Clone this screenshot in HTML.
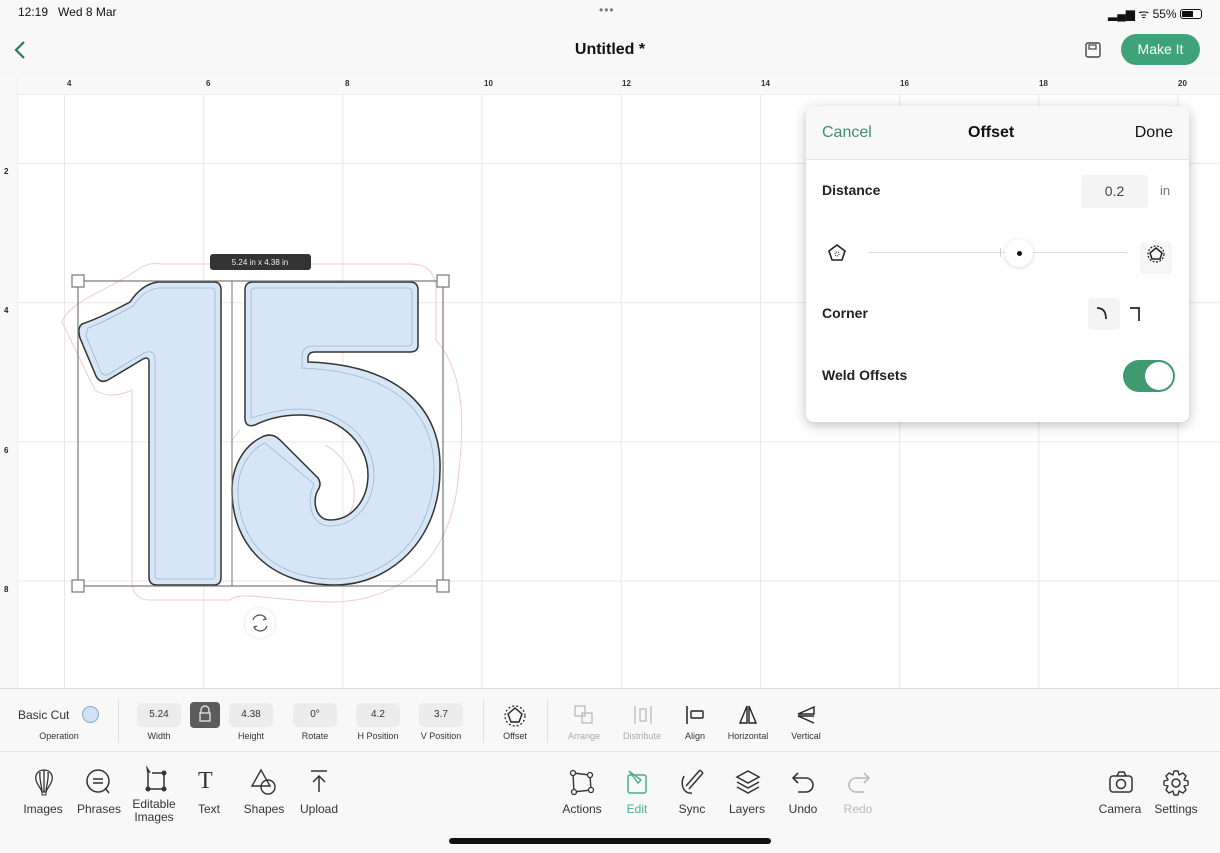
<!DOCTYPE html>
<html><head><meta charset="utf-8"><style>
*{margin:0;padding:0;box-sizing:border-box}
body{width:1220px;height:853px;overflow:hidden;background:#f8f8f8;font-family:"Liberation Sans",sans-serif;color:#222;position:relative}
.abs{position:absolute}
.canvas{left:0;top:77px;width:1220px;height:611px;background:#fff;
background-image:linear-gradient(90deg,#e8e8e8 1px,transparent 1px),linear-gradient(#e8e8e8 1px,transparent 1px);
background-size:139.2px 139.2px,139.2px 139.2px;background-position:64px 86px,64px 86px}
.rt{left:0;top:77px;width:1220px;height:18px;background:#f9f9f9;border-bottom:1px solid #eee;font-size:8px;color:#333;font-weight:bold}
.rl{left:0;top:77px;width:18px;height:611px;background:#f9f9f9;border-right:1px solid #eee;font-size:8px;font-weight:bold}
.tb1{left:0;top:688px;width:1220px;height:64px;background:#f8f8f8;border-top:1px solid #ddd;border-bottom:1px solid #e6e6e6}
.fld{position:absolute;top:703px;height:24px;background:#ececec;border-radius:5px;font-size:10px;text-align:center;line-height:24px;color:#333}
.lbl{position:absolute;top:731px;font-size:9px;color:#333;text-align:center;width:70px;margin-left:-35px}
.bl{position:absolute;top:803px;font-size:12px;color:#333;text-align:center;width:70px;margin-left:-35px;line-height:13px}
.ic{position:absolute}
</style></head><body>
<div class="abs" style="left:18px;top:5px;font-size:12px;color:#111">12:19&nbsp;&nbsp; Wed 8 Mar</div>
<div class="abs" style="left:599px;top:3px;font-size:12px;color:#777;letter-spacing:1px">•••</div>
<div class="abs" style="left:1108px;top:5px;font-size:12px;color:#111">▂▄▆ ᯤ 55% <span style="display:inline-block;width:22px;height:10px;border:1px solid #111;border-radius:3px;vertical-align:-1px;position:relative"><span style="position:absolute;left:1px;top:1px;width:11px;height:6px;background:#111"></span></span></div>
<svg class="abs" style="left:10px;top:40px" width="20" height="20"><path d="M14 2 L6 10 L14 18" fill="none" stroke="#2c7a58" stroke-width="2.2"/></svg>
<div class="abs" style="left:0;width:1220px;top:41px;text-align:center;font-size:16px;font-weight:bold;color:#111">Untitled *</div>
<svg class="abs" style="left:1084px;top:41px" width="18" height="18"><rect x="2" y="2" width="14" height="14" rx="2" fill="none" stroke="#444" stroke-width="1.4"/><rect x="5" y="4" width="7" height="4" fill="none" stroke="#444" stroke-width="1.2"/></svg>
<div class="abs" style="left:1121px;top:34px;width:79px;height:31px;border-radius:16px;background:#3fa37a;color:#fff;font-size:14px;text-align:center;line-height:31px">Make It</div>

<div class="abs canvas"></div>
<div class="abs rt">
<span class="abs" style="left:67px;top:2px">4</span><span class="abs" style="left:206px;top:2px">6</span><span class="abs" style="left:345px;top:2px">8</span><span class="abs" style="left:484px;top:2px">10</span><span class="abs" style="left:622px;top:2px">12</span><span class="abs" style="left:761px;top:2px">14</span><span class="abs" style="left:900px;top:2px">16</span><span class="abs" style="left:1039px;top:2px">18</span><span class="abs" style="left:1178px;top:2px">20</span></div>
<div class="abs rl"><span class="abs" style="left:4px;top:90px">2</span><span class="abs" style="left:4px;top:229px">4</span><span class="abs" style="left:4px;top:369px">6</span><span class="abs" style="left:4px;top:508px">8</span></div>

<svg class="abs" style="left:0;top:0" width="1220" height="690">
<g fill="none" stroke="#f2c9d2" stroke-width="1">
<path d="M62,322 C70,300 110,290 140,268 Q150,262 160,264 L226,264 L234,270 L238,264 L410,264 Q436,264 436,290 L436,340 C470,380 462,440 458,480 C450,560 400,600 335,602 C280,602 240,590 230,600 L150,600 Q132,600 132,580 L132,390 Q110,400 95,390 Z"/>
<path d="M232,440 L240,430 M325,445 C355,460 365,505 340,525"/>
</g>
<g stroke="#333" stroke-width="1.5" fill="#d6e6f6">
<path d="M82,324 Q100,318 130,302 Q142,284 158,282 L214,282 Q221,282 221,290 L221,577 Q221,585 214,585 L157,585 Q149,585 149,577 L149,362 Q149,356 143,359 L108,380 Q100,384 96,376 L80,338 Q77,328 82,324 Z"/>
<path d="M245,290 Q245,282 253,282 L410,282 Q418,282 418,290 L418,345 Q418,352 410,352 L315,352 Q308,352 308,358 L308,362 C400,365 442,410 440,470 C440,540 390,585 335,585 C270,585 232,545 232,490 C232,465 245,445 262,437 Q272,432 280,440 L318,478 Q322,484 318,490 C312,500 315,520 330,520 C352,520 368,500 368,475 C368,440 335,415 300,415 C280,415 265,420 255,425 Q245,428 245,418 Z"/>
</g>
<g stroke="#9bb6d2" stroke-width="0.8" fill="none">
<path d="M88,328 Q104,322 133,306 Q144,290 158,288 L212,288 Q215,288 215,292 L215,576 Q215,579 212,579 L159,579 Q155,579 155,576 L155,358 Q154,349 144,353 L109,374 Q104,377 101,372 L86,336 Z"/>
<path d="M251,292 Q251,288 255,288 L408,288 Q412,288 412,292 L412,343 Q412,346 408,346 L312,346 Q302,346 302,358 L302,368 C395,372 434,412 434,470 C434,535 388,579 335,579 C274,579 238,543 238,490 C238,468 250,450 265,443 L314,484 C306,500 310,526 330,526 C356,526 374,502 374,475 C374,436 338,409 300,409 C282,409 268,413 251,418 Z"/>
</g>
<rect x="78" y="281" width="365" height="305" fill="none" stroke="#777" stroke-width="1.2"/>
<line x1="232" y1="281" x2="232" y2="586" stroke="#777" stroke-width="1"/>
<g fill="#fff" stroke="#777" stroke-width="1.2"><rect x="72" y="275" width="12" height="12"/><rect x="437" y="275" width="12" height="12"/><rect x="72" y="580" width="12" height="12"/><rect x="437" y="580" width="12" height="12"/></g>
<rect x="210" y="254" width="101" height="16" rx="3" fill="#333"/>
<text x="260" y="265" font-size="8" fill="#eee" text-anchor="middle" font-family="Liberation Sans">5.24 in x 4.38 in</text>
<circle cx="260" cy="623" r="16" fill="#fff" stroke="#eee"/>
<path d="M253,620 A7,7 0 0 1 266,619 M267,626 A7,7 0 0 1 254,627 M264,616 L266,619 L263,620 M256,630 L254,627 L257,626" fill="none" stroke="#555" stroke-width="1.3"/>
</svg>

<div class="abs" style="left:806px;top:106px;width:383px;height:316px;background:#fff;border-radius:8px;box-shadow:0 3px 12px rgba(0,0,0,.25)">
<div style="height:54px;background:#f8f8f8;border-bottom:1px solid #e3e3e3;border-radius:8px 8px 0 0;position:relative">
<span class="abs" style="left:16px;top:18px;font-size:16px;color:#3f8f6c">Cancel</span>
<span class="abs" style="left:162px;top:18px;font-size:16px;font-weight:bold;color:#111">Offset</span>
<span class="abs" style="right:16px;top:18px;font-size:16px;color:#111">Done</span></div>
<span class="abs" style="left:16px;top:76px;font-size:14px;font-weight:bold">Distance</span>
<div class="abs" style="left:275px;top:69px;width:67px;height:33px;background:#f4f4f4;border-radius:4px;text-align:center;line-height:33px;font-size:14px;color:#444">0.2</div>
<span class="abs" style="left:354px;top:77px;font-size:13px;color:#777">in</span>
<svg class="abs" style="left:20px;top:136px" width="22" height="22"><path d="M11,3 L19,9 L16,18 L6,18 L3,9 Z" fill="none" stroke="#222" stroke-width="1.6"/><circle cx="11" cy="12" r="2" fill="none" stroke="#222" stroke-dasharray="1 1"/></svg>
<div class="abs" style="left:63px;top:146px;width:258px;height:1px;background:#ddd"></div>
<div class="abs" style="left:194px;top:142px;width:1px;height:9px;background:#ccc"></div>
<div class="abs" style="left:199px;top:133px;width:28px;height:28px;border-radius:50%;background:#fff;box-shadow:0 1px 5px rgba(0,0,0,.15)"></div>
<div class="abs" style="left:211px;top:145px;width:5px;height:5px;border-radius:50%;background:#111"></div>
<div class="abs" style="left:334px;top:136px;width:32px;height:32px;background:#f6f6f6;border-radius:4px"></div>
<svg class="abs" style="left:339px;top:137px" width="22" height="22"><path d="M11,5 L17,10 L15,16 L7,16 L5,10 Z" fill="none" stroke="#222" stroke-width="1.5"/><circle cx="11" cy="11" r="8" fill="none" stroke="#222" stroke-width="1.2" stroke-dasharray="2 1.5"/></svg>
<span class="abs" style="left:16px;top:199px;font-size:14px;font-weight:bold">Corner</span>
<div class="abs" style="left:282px;top:192px;width:32px;height:32px;background:#f4f4f4;border-radius:4px"></div>
<svg class="abs" style="left:288px;top:199px" width="60" height="22"><path d="M3,3 Q12,3 12,14" fill="none" stroke="#222" stroke-width="1.7"/><path d="M36,3 L45,3 L45,16" fill="none" stroke="#222" stroke-width="1.7"/></svg>
<span class="abs" style="left:16px;top:261px;font-size:14px;font-weight:bold">Weld Offsets</span>
<div class="abs" style="left:317px;top:254px;width:52px;height:32px;border-radius:16px;background:#3f9a70"><div style="position:absolute;right:2px;top:2px;width:28px;height:28px;border-radius:50%;background:#fff"></div></div>
</div>

<div class="abs tb1"></div>
<span class="abs" style="left:18px;top:708px;font-size:12px;color:#333">Basic Cut</span>
<div class="abs" style="left:82px;top:706px;width:17px;height:17px;border-radius:50%;background:#cfe1f4;border:1px solid #8aa8c8"></div>
<div class="lbl" style="left:59px">Operation</div>
<div class="abs" style="left:118px;top:699px;width:1px;height:44px;background:#e0e0e0"></div>
<div class="fld" style="left:137px;width:44px">5.24</div><div class="lbl" style="left:159px">Width</div>
<div class="abs" style="left:190px;top:702px;width:30px;height:26px;background:#5c5c5c;border-radius:4px"></div>
<svg class="abs" style="left:197px;top:705px" width="16" height="18"><path d="M4,8 V5 A4,4 0 0 1 12,5 V8" fill="none" stroke="#ddd" stroke-width="1.4"/><rect x="3" y="8" width="10" height="8" fill="none" stroke="#ddd" stroke-width="1.4"/></svg>
<div class="fld" style="left:229px;width:44px">4.38</div><div class="lbl" style="left:251px">Height</div>
<div class="fld" style="left:293px;width:44px">0°</div><div class="lbl" style="left:315px">Rotate</div>
<div class="fld" style="left:356px;width:44px">4.2</div><div class="lbl" style="left:378px">H Position</div>
<div class="fld" style="left:419px;width:44px">3.7</div><div class="lbl" style="left:441px">V Position</div>
<div class="abs" style="left:483px;top:699px;width:1px;height:44px;background:#e0e0e0"></div>
<svg class="ic" style="left:503px;top:702px" width="24" height="26"><path d="M12,6 L19,12 L16,20 L8,20 L5,12 Z" fill="none" stroke="#222" stroke-width="1.4"/><circle cx="12" cy="14" r="10" fill="none" stroke="#222" stroke-width="1.2" stroke-dasharray="2 2"/></svg>
<div class="lbl" style="left:515px">Offset</div>
<div class="abs" style="left:547px;top:699px;width:1px;height:44px;background:#e0e0e0"></div>
<svg class="ic" style="left:573px;top:704px" width="24" height="22"><rect x="2" y="2" width="10" height="10" fill="none" stroke="#bbb" stroke-width="1.3"/><rect x="9" y="9" width="10" height="10" fill="none" stroke="#bbb" stroke-width="1.3"/></svg><div class="lbl" style="left:584px;color:#aaa">Arrange</div>
<svg class="ic" style="left:632px;top:704px" width="22" height="22"><path d="M3,2 V20 M19,2 V20" stroke="#bbb" stroke-width="1.3"/><rect x="8" y="5" width="6" height="12" fill="none" stroke="#bbb" stroke-width="1.3"/></svg><div class="lbl" style="left:642px;color:#aaa">Distribute</div>
<svg class="ic" style="left:684px;top:704px" width="22" height="22"><path d="M3,2 V20" stroke="#222" stroke-width="1.5"/><rect x="7" y="7" width="12" height="7" rx="1" fill="none" stroke="#222" stroke-width="1.4"/></svg><div class="lbl" style="left:695px">Align</div>
<svg class="ic" style="left:737px;top:704px" width="22" height="22"><path d="M10,2 L3,19 H10 Z M12,2 L19,19 H12 Z" fill="none" stroke="#222" stroke-width="1.4"/></svg><div class="lbl" style="left:748px">Horizontal</div>
<svg class="ic" style="left:795px;top:704px" width="22" height="22"><path d="M19,3 L3,10 H19 Z M19,12 L3,12 L19,19" fill="none" stroke="#222" stroke-width="1.4"/></svg><div class="lbl" style="left:806px">Vertical</div>

<svg class="ic" style="left:32px;top:768px" width="24" height="30"><path d="M12,2 C5,2 3,8 4,12 C5,17 9,20 10,24 H14 C15,20 19,17 20,12 C21,8 19,2 12,2 Z M12,2 V24 M8,4 C7,12 10,18 10,24 M16,4 C17,12 14,18 14,24" fill="none" stroke="#333" stroke-width="1.3"/><rect x="10" y="24" width="4" height="3" fill="none" stroke="#333"/></svg><div class="bl" style="left:43px">Images</div>
<svg class="ic" style="left:85px;top:768px" width="28" height="28"><circle cx="13" cy="13" r="11" fill="none" stroke="#333" stroke-width="1.5"/><path d="M8,11 H18 M8,15 H18" stroke="#333" stroke-width="1.5"/><path d="M20,20 L24,25" stroke="#333" stroke-width="1.5"/></svg><div class="bl" style="left:99px">Phrases</div>
<svg class="ic" style="left:141px;top:763px" width="28" height="30"><path d="M7,8 V26 H23 V10 H11" fill="none" stroke="#333" stroke-width="1.5"/><path d="M5,2 L10,10 L6,9 Z" fill="#333"/><circle cx="7" cy="26" r="2.5" fill="#333"/><circle cx="23" cy="26" r="2.5" fill="#333"/><circle cx="23" cy="10" r="2.5" fill="#333"/></svg><div class="bl" style="left:154px;top:798px">Editable<br>Images</div>
<div class="abs" style="left:198px;top:768px;font-family:'Liberation Serif',serif;font-size:24px;color:#333">T</div><div class="bl" style="left:209px">Text</div>
<svg class="ic" style="left:250px;top:768px" width="30" height="30"><path d="M11,2 L2,18 H20 Z" fill="none" stroke="#333" stroke-width="1.4"/><circle cx="18" cy="19" r="7" fill="none" stroke="#333" stroke-width="1.4"/></svg><div class="bl" style="left:264px">Shapes</div>
<svg class="ic" style="left:308px;top:768px" width="22" height="26"><path d="M3,3 H19 M11,24 V8 M5,14 L11,8 L17,14" fill="none" stroke="#333" stroke-width="1.5"/></svg><div class="bl" style="left:319px">Upload</div>

<svg class="ic" style="left:568px;top:768px" width="28" height="28"><path d="M5,5 L22,7 L23,22 L6,24 Z" fill="none" stroke="#333" stroke-width="1.4"/><g fill="#fff" stroke="#333" stroke-width="1.3"><circle cx="5" cy="5" r="2.5"/><circle cx="22" cy="7" r="2.5"/><circle cx="23" cy="22" r="2.5"/><circle cx="6" cy="24" r="2.5"/></g></svg><div class="bl" style="left:582px">Actions</div>
<svg class="ic" style="left:624px;top:768px" width="28" height="28"><rect x="4" y="7" width="18" height="18" rx="2" fill="none" stroke="#48b08a" stroke-width="1.5"/><path d="M5,3 L14,15 L17,12 Z" fill="none" stroke="#48b08a" stroke-width="1.4"/></svg><div class="bl" style="left:637px;color:#4cae88">Edit</div>
<svg class="ic" style="left:678px;top:768px" width="28" height="28"><path d="M22,2 L8,18 M25,5 L11,21 M22,2 L25,5 M6,8 C2,16 5,26 14,25" fill="none" stroke="#333" stroke-width="1.5"/></svg><div class="bl" style="left:692px">Sync</div>
<svg class="ic" style="left:734px;top:768px" width="28" height="28"><path d="M14,3 L25,9 L14,15 L3,9 Z M3,14 L14,20 L25,14 M3,19 L14,25 L25,19" fill="none" stroke="#333" stroke-width="1.5"/></svg><div class="bl" style="left:747px">Layers</div>
<svg class="ic" style="left:790px;top:770px" width="28" height="26"><path d="M8,3 L3,8 L8,13 M3,8 H16 A7,7 0 0 1 16,22 H8" fill="none" stroke="#333" stroke-width="1.6"/></svg><div class="bl" style="left:803px">Undo</div>
<svg class="ic" style="left:844px;top:770px" width="28" height="26"><path d="M20,3 L25,8 L20,13 M25,8 H12 A7,7 0 0 0 12,22 H20" fill="none" stroke="#bbb" stroke-width="1.6"/></svg><div class="bl" style="left:858px;color:#bbb">Redo</div>
<svg class="ic" style="left:1107px;top:770px" width="28" height="26"><rect x="3" y="6" width="22" height="16" rx="3" fill="none" stroke="#333" stroke-width="1.5"/><circle cx="14" cy="14" r="4.5" fill="none" stroke="#333" stroke-width="1.5"/><path d="M10,6 L12,2 H17 L19,6" fill="none" stroke="#333" stroke-width="1.5"/></svg><div class="bl" style="left:1120px">Camera</div>
<svg class="ic" style="left:1162px;top:769px" width="28" height="28"><circle cx="14" cy="14" r="4" fill="none" stroke="#333" stroke-width="1.5"/><path d="M12,2 H16 L17,6 L21,4 L24,7 L22,11 L26,12 V16 L22,17 L24,21 L21,24 L17,22 L16,26 H12 L11,22 L7,24 L4,21 L6,17 L2,16 V12 L6,11 L4,7 L7,4 L11,6 Z" fill="none" stroke="#333" stroke-width="1.4" stroke-linejoin="round"/></svg><div class="bl" style="left:1176px">Settings</div>
<div class="abs" style="left:449px;top:838px;width:322px;height:6px;border-radius:3px;background:#111"></div>
</body></html>
